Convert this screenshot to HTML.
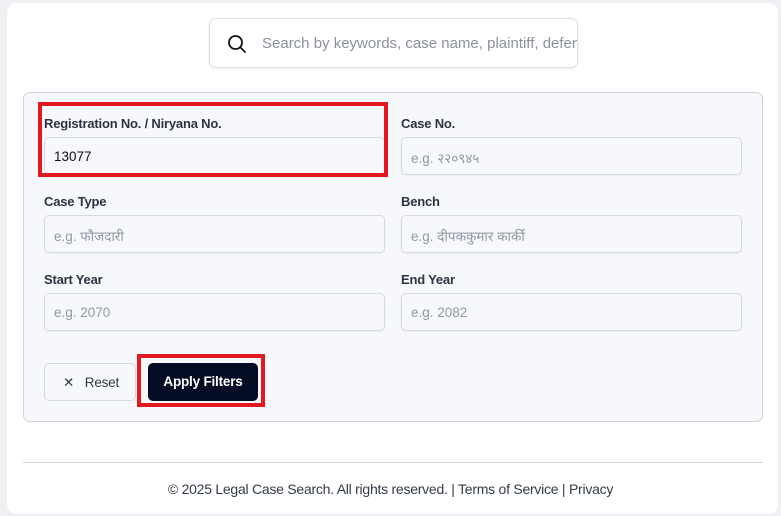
<!DOCTYPE html>
<html><head><meta charset="utf-8"><style>
*{box-sizing:border-box;margin:0;padding:0}
body{width:781px;height:516px;background:#eef0f3;font-family:"Liberation Sans","Noto Sans CJK SC",sans-serif;position:relative;overflow:hidden}
.card{position:absolute;left:7px;top:3px;width:771px;height:511px;background:#fff;border-radius:10px}
.search{position:absolute;left:209px;top:18px;width:369px;height:50px;border:1px solid #dcdfe4;border-radius:7px;background:#fff;box-shadow:0 1px 3px rgba(0,0,0,.08);overflow:hidden}
.search svg{position:absolute;left:17px;top:15px}
.search span{position:absolute;left:52px;top:16px;font-size:15px;color:#8b909a;white-space:nowrap;letter-spacing:0}
.panel{position:absolute;left:23px;top:92px;width:740px;height:330px;background:#f7f8fb;border:1px solid #cfd3d9;border-radius:7px}
.lbl{position:absolute;font-size:13px;font-weight:bold;color:#2c3340;letter-spacing:-.2px}
.inp{position:absolute;width:341px;height:38px;background:#f7f8fb;border:1px solid #d6dae0;border-radius:5px;font-size:13.5px;color:#9197a1;padding:11px 0 0 9px;box-shadow:0 1px 2px rgba(0,0,0,.05)}
.red{position:absolute;border:4px solid #e3191f}
.btn{position:absolute;top:363px;height:38px;border-radius:5px;font-size:13.5px;letter-spacing:-.2px}
.line{position:absolute;left:23px;top:462px;width:740px;height:1px;background:#d3d6db}
.foot{position:absolute;top:481px;left:0;width:781px;text-align:center;font-size:14px;color:#333b47;letter-spacing:-.25px}
</style></head><body>
<div class="card"></div>
<div class="search"><svg width="20" height="20" viewBox="0 0 20 20"><circle cx="8.5" cy="8.5" r="6.5" fill="none" stroke="#111" stroke-width="1.8"/><path d="M13.3 13.3L18 18" stroke="#111" stroke-width="1.8" stroke-linecap="round"/></svg><span>Search by keywords, case name, plaintiff, defendant</span></div>
<div class="panel"></div>
<div class="lbl" style="left:44px;top:116px">Registration No. / Niryana No.</div>
<div class="lbl" style="left:401px;top:116px">Case No.</div>
<div class="inp" style="left:44px;top:137px;color:#111">13077</div>
<div class="inp" style="left:401px;top:137px">e.g. २२०९४५</div>
<div class="lbl" style="left:44px;top:194px">Case Type</div>
<div class="lbl" style="left:401px;top:194px">Bench</div>
<div class="inp" style="left:44px;top:215px">e.g. फौजदारी</div>
<div class="inp" style="left:401px;top:215px">e.g. दीपककुमार कार्की</div>
<div class="lbl" style="left:44px;top:272px">Start Year</div>
<div class="lbl" style="left:401px;top:272px">End Year</div>
<div class="inp" style="left:44px;top:293px">e.g. 2070</div>
<div class="inp" style="left:401px;top:293px">e.g. 2082</div>
<div class="red" style="left:38px;top:102px;width:350px;height:75px"></div>
<div class="btn" style="left:44px;width:92px;border:1px solid #d6dae0;background:#f7f8fb;color:#333b47;padding-top:11px;padding-left:18px">✕&nbsp;&nbsp; Reset</div>
<div class="red" style="left:137px;top:354px;width:128px;height:53px"></div>
<div class="btn" style="left:148px;width:110px;background:#050d24;color:#fff;font-weight:bold;text-align:center;padding-top:11px">Apply Filters</div>
<div class="line"></div>
<div class="foot">© 2025 Legal Case Search. All rights reserved. | Terms of Service | Privacy</div>
</body></html>
